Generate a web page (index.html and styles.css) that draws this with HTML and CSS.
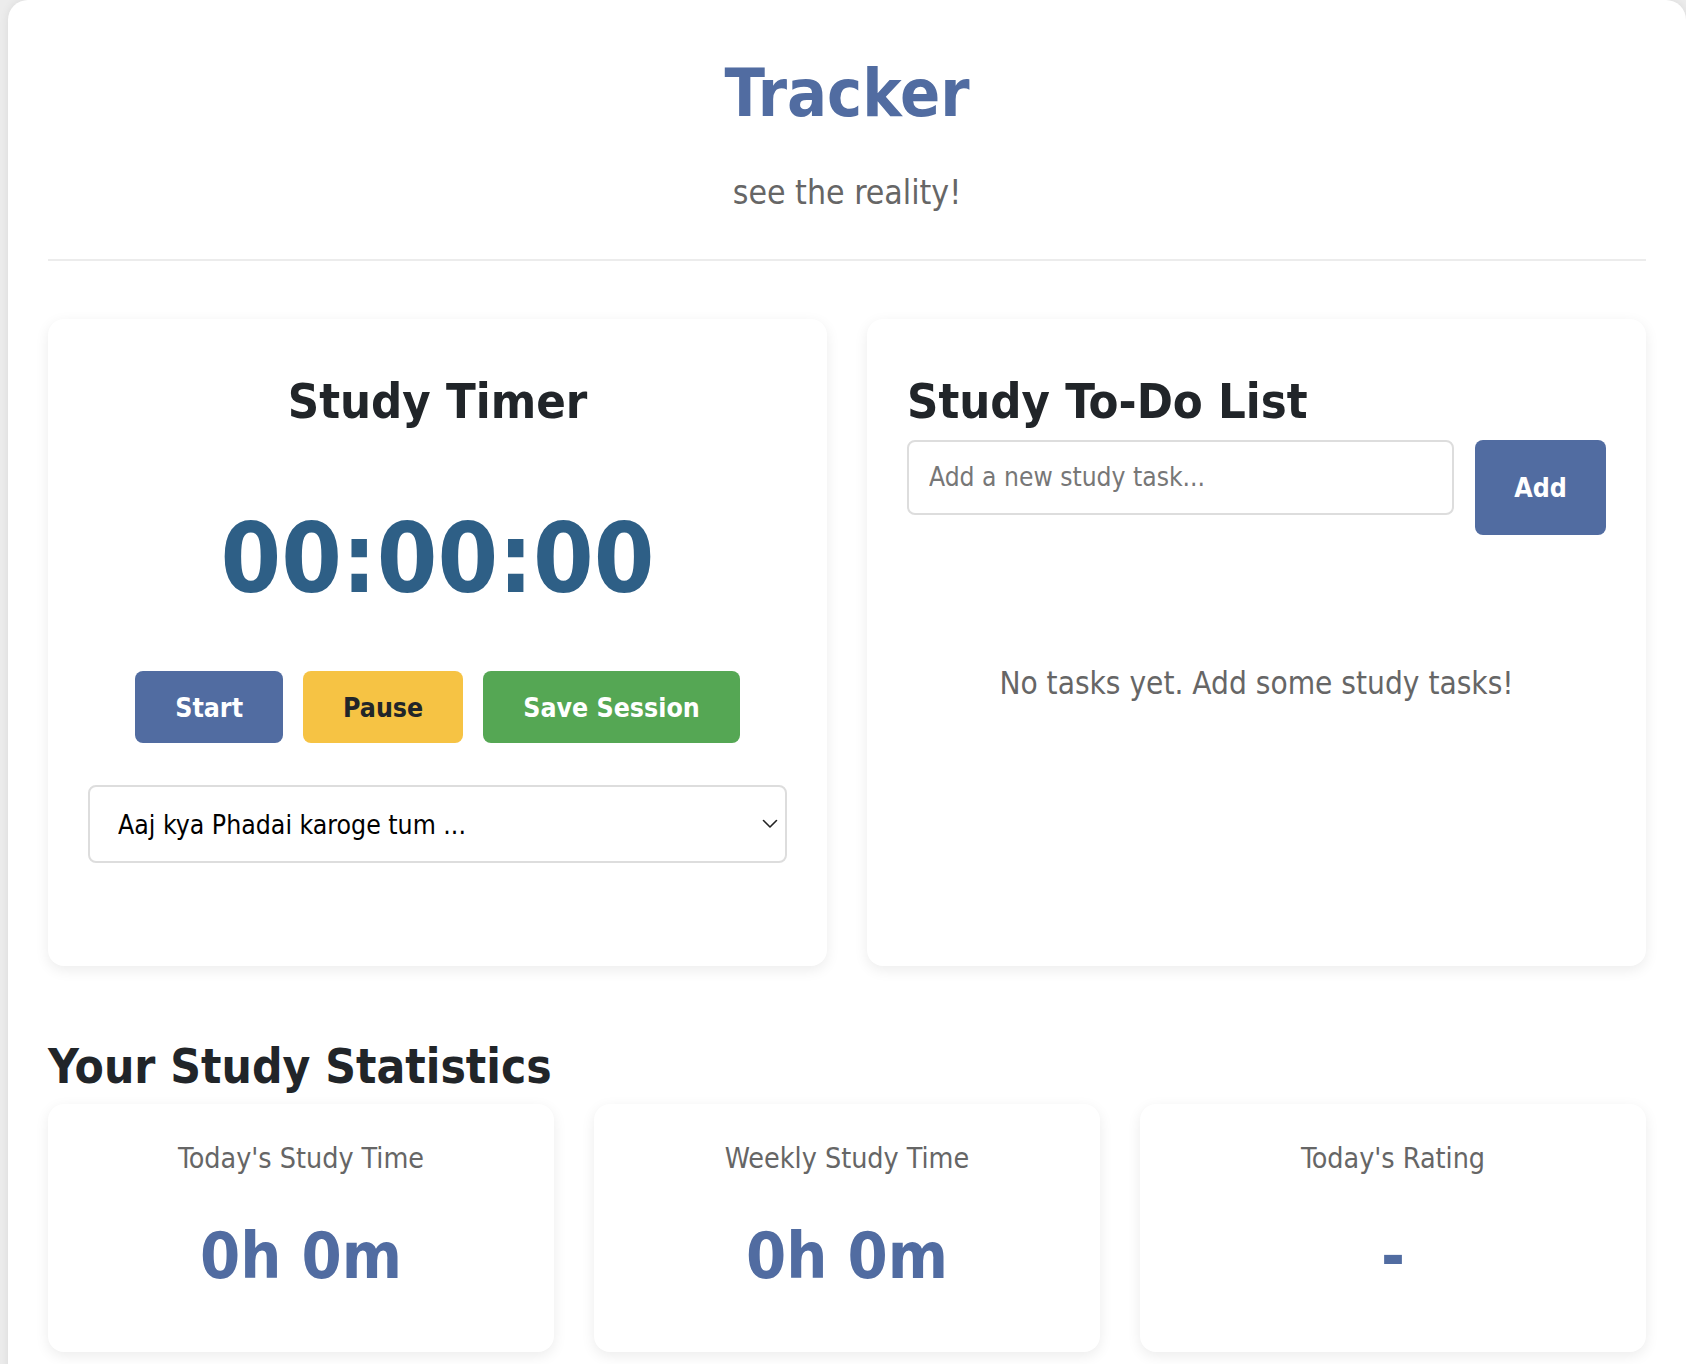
FILE: index.html
```html
<!DOCTYPE html>
<html lang="en">
<head>
<meta charset="utf-8">
<title>Tracker</title>
<link rel="stylesheet" href="styles.css">
</head>
<body>
<div class="container">
  <header class="header">
    <h1 class="title">Tracker</h1>
    <p class="subtitle">see the reality!</p>
  </header>

  <div class="main-grid">
    <section class="card timer-card">
      <h2 class="card-title center">Study Timer</h2>
      <div class="timer">00:00:00</div>
      <div class="timer-buttons">
        <button class="btn btn-start">Start</button>
        <button class="btn btn-pause">Pause</button>
        <button class="btn btn-save">Save Session</button>
      </div>
      <div class="select-wrap">
        <select class="subject-select">
          <option>Aaj kya Phadai karoge tum ...</option>
        </select>
        <svg class="chevron" width="16" height="10" viewBox="0 0 16 10"><path d="M1.5 1.5 L8 8 L14.5 1.5" fill="none" stroke="#222" stroke-width="1.6" stroke-linecap="round" stroke-linejoin="round"/></svg>
      </div>
    </section>

    <section class="card todo-card">
      <h2 class="card-title">Study To-Do List</h2>
      <div class="todo-form">
        <input class="todo-input" type="text" placeholder="Add a new study task...">
        <button class="btn btn-add">Add</button>
      </div>
      <div class="task-list">
        <p class="empty">No tasks yet. Add some study tasks!</p>
      </div>
    </section>
  </div>

  <h2 class="section-title">Your Study Statistics</h2>
  <div class="stats-grid">
    <div class="stat-card">
      <div class="stat-label">Today's Study Time</div>
      <div class="stat-value">0h 0m</div>
    </div>
    <div class="stat-card">
      <div class="stat-label">Weekly Study Time</div>
      <div class="stat-value">0h 0m</div>
    </div>
    <div class="stat-card">
      <div class="stat-label">Today's Rating</div>
      <div class="stat-value">-</div>
    </div>
  </div>
</div>
</body>
</html>
```

FILE: styles.css
```css
* { box-sizing: border-box; }

html, body {
  margin: 0;
  padding: 0;
}

body {
  background: #ececec;
  font-family: "DejaVu Sans Condensed", "DejaVu Sans", sans-serif;
  font-stretch: condensed;
  color: #212529;
  overflow: hidden;
}

.container {
  margin: 0 0 0 8px;
  background: #ffffff;
  border-radius: 20px;
  box-shadow: 0 0 10px rgba(0, 0, 0, 0.08);
  padding: 54px 40px 60px;
  min-height: 1400px;
}

.header {
  text-align: center;
  padding-bottom: 46.5px;
  border-bottom: 2px solid #ececec;
}

.title {
  margin: 0;
  font-size: 66px;
  line-height: 1.2;
  font-weight: 700;
  color: #516ca1;
}

.subtitle {
  margin: 39.5px 0 0;
  font-size: 33.5px;
  line-height: 1.2;
  color: #666666;
}

.main-grid {
  display: grid;
  grid-template-columns: 1fr 1fr;
  gap: 40px;
  margin-top: 58px;
}

.card {
  background: #ffffff;
  border-radius: 16px;
  box-shadow: 0 4px 14px rgba(0, 0, 0, 0.08);
  padding: 53px 40px 40px;
}

.card-title {
  margin: 0;
  font-size: 48.5px;
  line-height: 1.2;
  font-weight: 700;
  color: #212529;
}

.center { text-align: center; }

.timer {
  margin-top: 70px;
  text-align: center;
  font-size: 97px;
  line-height: 1.2;
  font-weight: 700;
  color: #2e5f86;
}

.timer-buttons {
  display: flex;
  justify-content: center;
  gap: 20px;
  margin-top: 54.5px;
}

.btn {
  font-family: inherit;
  font-stretch: condensed;
  font-weight: 700;
  font-size: 26.5px;
  border: none;
  border-radius: 8px;
  cursor: pointer;
  color: #ffffff;
  height: 72px;
  padding: 0 40px;
}

.btn-start { background: #516ca1; }
.btn-pause { background: #f6c344; color: #212529; }
.btn-save { background: #55a754; }

.select-wrap {
  position: relative;
  margin-top: 42px;
}

.subject-select {
  display: block;
  width: 100%;
  height: 78px;
  appearance: none;
  -webkit-appearance: none;
  background: #ffffff;
  border: 2px solid #dddddd;
  border-radius: 8px;
  padding: 0 26px 0 28px;
  font-family: inherit;
  font-stretch: condensed;
  font-size: 26.4px;
  color: #000000;
}

.chevron {
  position: absolute;
  right: 9px;
  top: 34px;
}

.todo-form {
  display: flex;
  align-items: flex-start;
  gap: 21px;
  margin-top: 9px;
}

.todo-input {
  flex: 1;
  min-width: 0;
  height: 75px;
  border: 2px solid #dddddd;
  border-radius: 8px;
  padding: 0 20px;
  font-family: inherit;
  font-stretch: condensed;
  font-size: 26.2px;
  color: #212529;
  background: #ffffff;
}

.todo-input::placeholder { color: #777777; }

.btn-add {
  width: 131px;
  height: 95px;
  padding: 0;
  background: #516ca1;
}

.task-list {
  min-height: 391px;
  padding-top: 130.4px;
}

.empty {
  margin: 0;
  text-align: center;
  font-size: 31.3px;
  line-height: 1.2;
  color: #666666;
}

.section-title {
  margin: 72px 0 0;
  font-size: 47.5px;
  line-height: 1.2;
  font-weight: 700;
  color: #212529;
}

.stats-grid {
  display: grid;
  grid-template-columns: repeat(3, 1fr);
  gap: 40px;
  margin-top: 9.5px;
}

.stat-card {
  background: #ffffff;
  border-radius: 16px;
  box-shadow: 0 4px 14px rgba(0, 0, 0, 0.08);
  padding: 38px 20px 58px;
  text-align: center;
}

.stat-label {
  font-size: 28.4px;
  line-height: 1.2;
  color: #666666;
}

.stat-value {
  margin-top: 40.5px;
  font-size: 64.3px;
  line-height: 1.2;
  font-weight: 700;
  color: #516ca1;
}
```
